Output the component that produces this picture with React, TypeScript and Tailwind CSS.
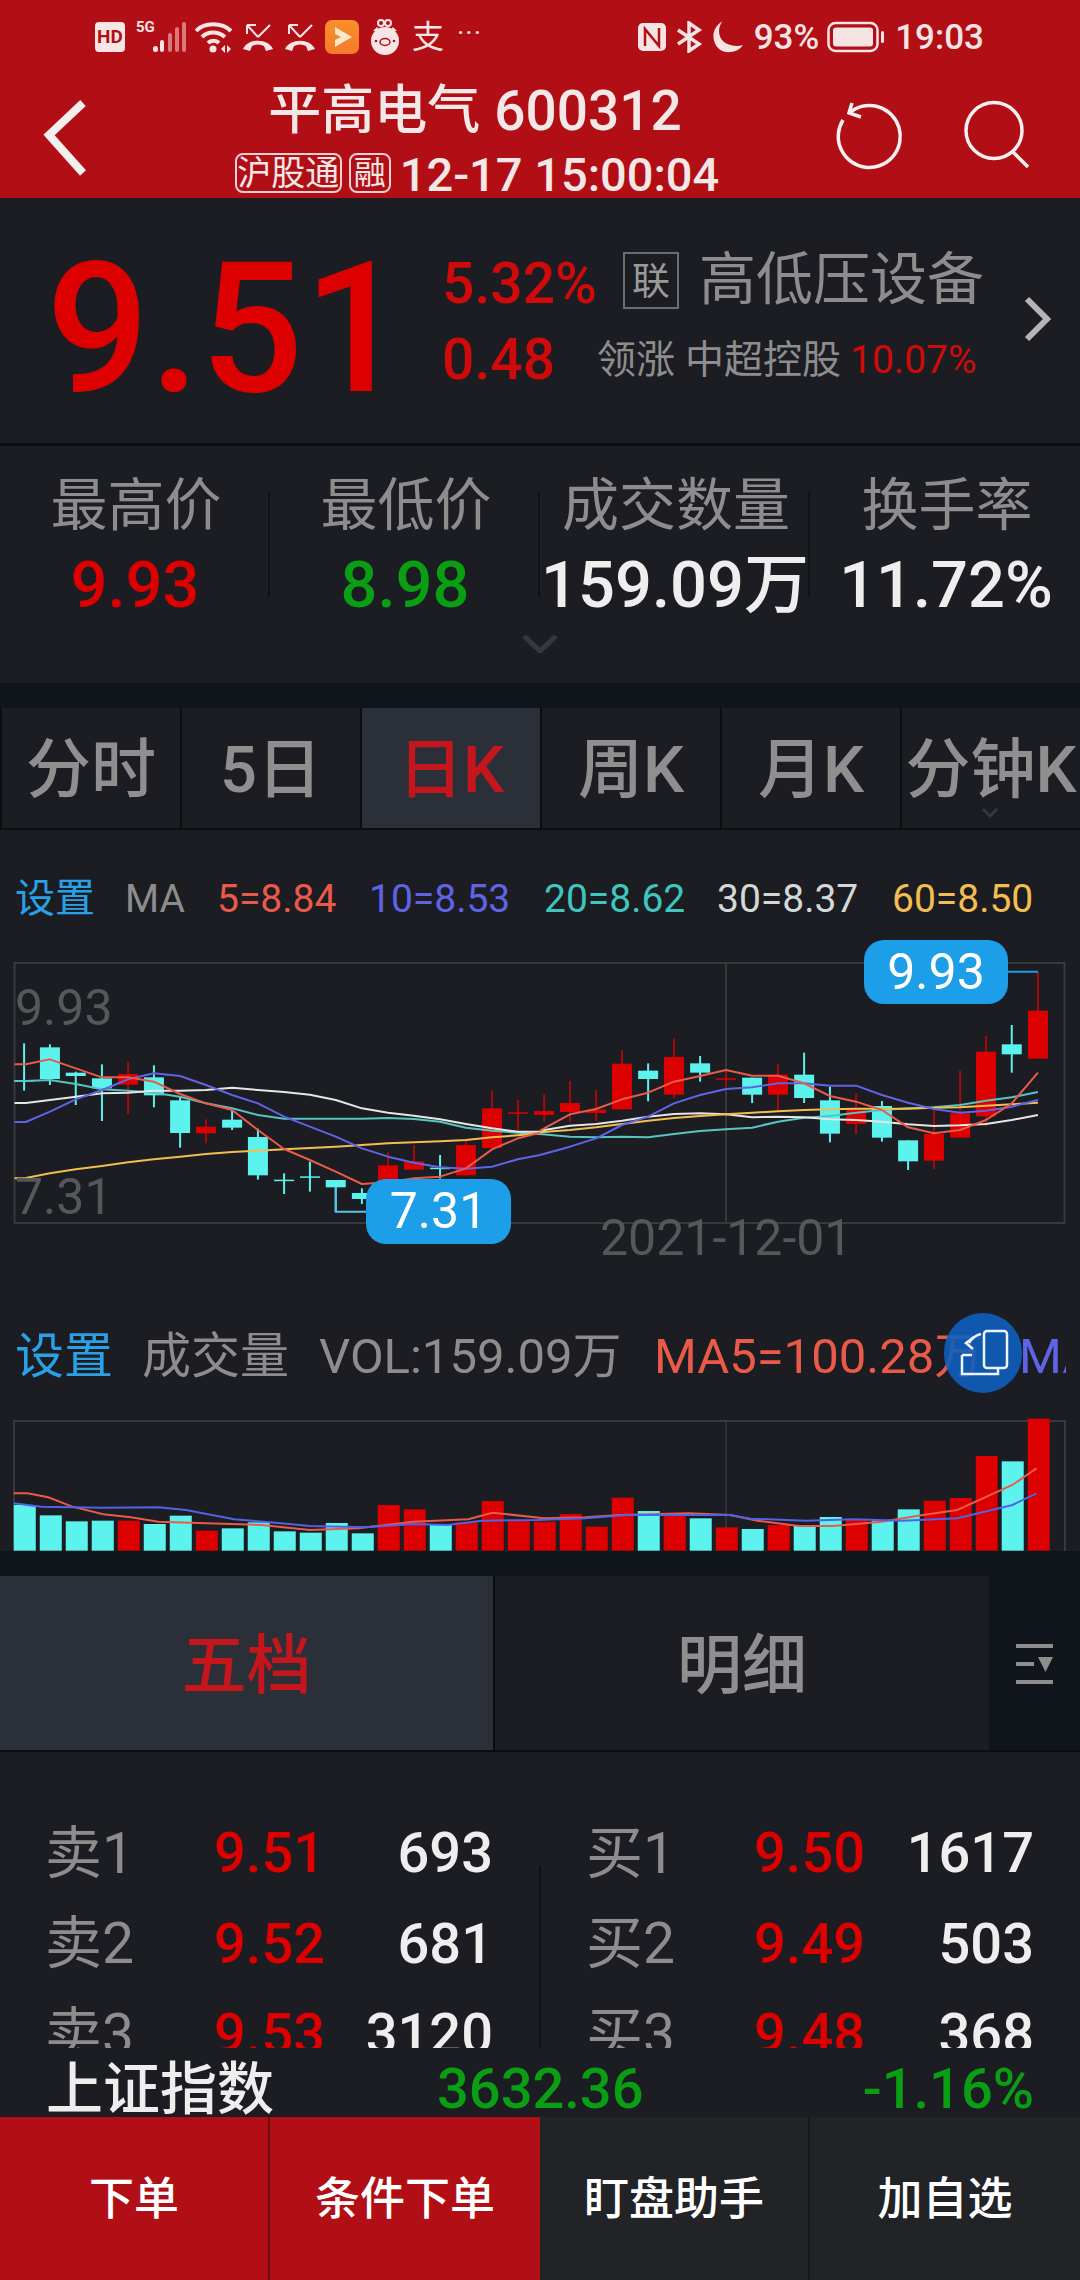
import React from "react";

const RED = "#dc0000";
const CY = "#5cf2ee";
type C = [number, number, number, number, number, number];
// [x, wickTop, wickBottom, bodyTop, bodyBottom, isRed] in crop coordinates
const leftC: C[] = [
  [70, 310, 452, 420, 424, 0], [145, 313, 435, 322, 417, 0], [220, 395, 495, 398, 408, 0], [296, 373, 543, 415, 445, 0],
  [372, 365, 522, 402, 434, 1], [447, 376, 502, 412, 466, 0], [523, 470, 623, 481, 579, 0], [598, 538, 610, 560, 580, 1],
  [674, 510, 570, 539, 563, 0], [749, 566, 719, 591, 706, 0], [825, 700, 762, 719, 722, 0], [900, 665, 755, 709, 713, 0],
  [975, 720, 815, 720, 742, 0], [1051, 745, 792, 759, 777, 0], [1127, 637, 788, 676, 782, 1], [1202, 615, 690, 664, 689, 1],
  [1278, 645, 716, 683, 686, 0], [1353, 600, 706, 615, 706, 1], [1429, 452, 624, 505, 624, 1], [1504, 480, 570, 517, 520, 1],
];
const rightC: C[] = [
  [12, 463, 545, 513, 525, 1], [87, 423, 546, 489, 516, 1], [163, 450, 543, 509, 519, 1], [238, 330, 508, 371, 508, 1],
  [314, 370, 484, 392, 417, 0], [389, 296, 475, 351, 464, 1], [465, 348, 425, 370, 398, 0], [540, 395, 440, 415, 418, 1],
  [616, 413, 489, 413, 464, 0], [691, 373, 512, 404, 464, 1], [767, 338, 489, 404, 474, 0], [842, 440, 607, 481, 581, 0],
  [918, 460, 582, 505, 552, 1], [993, 483, 605, 498, 593, 0], [1069, 601, 690, 601, 664, 0], [1144, 505, 687, 582, 662, 1],
  [1220, 392, 560, 520, 593, 1], [1295, 288, 560, 335, 529, 1], [1370, 255, 398, 313, 343, 0], [1446, 96, 212, 212, 356, 1],
];
const lx = (x: number) => x / 2.904;
const rx = (x: number) => 540 + x / 2.904;
const ky = (y: number) => 940 + y / 3;

const lines: { color: string; l: number[][]; r: number[][] }[] = [
  { color: "#58c4c0", l: [[42,423],[75,423],[145,420],[220,432],[296,448],[372,452],[447,458],[523,470],[598,490],[674,505],[749,525],[825,536],[900,536],[975,536],[1051,536],[1127,534],[1202,537],[1278,545],[1353,563],[1429,572],[1504,578],[1568,582]], r: [[0,582],[87,590],[163,592],[238,590],[314,592],[389,582],[465,573],[540,568],[616,563],[691,545],[767,533],[842,528],[918,518],[993,510],[1069,505],[1144,502],[1220,495],[1295,482],[1370,472],[1446,456]] },
  { color: "#e2e8e4", l: [[42,489],[75,489],[145,480],[220,470],[296,460],[372,458],[447,452],[523,452],[598,450],[674,443],[749,450],[825,456],[900,464],[975,480],[1051,505],[1127,518],[1202,527],[1278,538],[1353,552],[1429,565],[1504,575],[1568,575]], r: [[0,572],[87,557],[163,552],[238,542],[314,530],[389,522],[465,520],[540,523],[616,532],[691,530],[767,532],[842,538],[918,540],[993,545],[1069,553],[1144,558],[1220,556],[1295,552],[1370,540],[1446,525]] },
  { color: "#f4bd4f", l: [[42,715],[75,714],[145,700],[220,688],[296,678],[372,667],[447,658],[523,650],[598,642],[674,636],[749,632],[825,628],[900,624],[975,620],[1051,615],[1127,610],[1202,607],[1278,604],[1353,600],[1429,592],[1504,586],[1568,580]], r: [[0,577],[87,570],[163,562],[238,552],[314,542],[389,534],[465,528],[540,523],[616,518],[691,514],[767,510],[842,508],[918,506],[993,506],[1069,506],[1144,503],[1220,502],[1295,497],[1370,493],[1446,488]] },
  { color: "#5f63e6", l: [[42,546],[75,546],[145,515],[220,478],[296,450],[372,418],[447,400],[523,408],[598,435],[674,465],[749,490],[825,530],[900,560],[975,590],[1051,625],[1127,650],[1202,668],[1278,682],[1353,686],[1429,680],[1504,658],[1568,645]], r: [[0,645],[87,620],[163,595],[238,555],[314,530],[389,490],[465,465],[540,447],[616,442],[691,430],[767,430],[842,437],[918,437],[993,465],[1069,488],[1144,507],[1220,518],[1295,512],[1370,500],[1446,480]] },
  { color: "#ea5a48", l: [[42,373],[75,373],[145,358],[220,385],[296,412],[372,412],[447,425],[523,462],[598,490],[674,510],[749,570],[825,627],[900,660],[975,695],[1051,732],[1127,727],[1202,715],[1278,710],[1353,685],[1429,628],[1504,595],[1568,578]], r: [[0,572],[87,523],[163,507],[238,478],[314,458],[389,425],[465,408],[540,390],[616,407],[691,407],[767,430],[842,468],[918,485],[993,510],[1069,562],[1144,580],[1220,570],[1295,540],[1370,490],[1446,398]] },
];

const vols: [number, number][] = [
  [675,0],[706,0],[724,0],[722,0],[722,1],[732,0],[707,0],[752,1],[745,0],[727,0],[754,0],[758,0],[729,0],[760,0],[675,1],[688,1],[735,0],[727,1],[663,1],[722,1],
  [725,1],[702,1],[740,1],[653,1],[693,0],[700,1],[715,0],[742,1],[747,0],[735,1],[738,0],[711,0],[720,1],[722,0],[688,0],[662,1],[654,1],[528,1],[544,0],[416,1],
];
const vRed = [[20,640],[40,640],[70,652],[105,680],[150,703],[190,712],[230,725],[300,730],[380,735],[450,750],[520,745],[600,725],[680,718],[715,698],[790,715],[850,712],[900,705],[1000,700],[1060,705],[1100,722],[1160,738],[1210,738],[1280,725],[1340,705],[1390,690],[1470,615],[1505,565]];
const vBlue = [[20,670],[60,680],[150,683],[230,682],[270,690],[340,718],[400,728],[450,738],[530,742],[600,732],[650,735],[700,722],[780,720],[850,715],[910,705],[1060,705],[1090,716],[1170,722],[1240,718],[1310,722],[1390,715],[1470,675],[1505,640]];
const vx = (x: number) => x / 1.452;
const vy = (y: number) => 1280 + y / 3;

function Candles({ data, fx }: { data: C[]; fx: (x: number) => number }) {
  return (
    <>
      {data.map(([x, a, b, t, u, red], i) => (
        <g key={i}>
          <line x1={fx(x)} x2={fx(x)} y1={ky(a)} y2={ky(b)} stroke={red ? "#a80a0a" : CY} strokeWidth={2} />
          <rect x={fx(x) - 10} y={ky(t)} width={20} height={Math.max(ky(u) - ky(t), 1.5)} fill={red ? RED : CY} />
        </g>
      ))}
    </>
  );
}

function KChart() {
  return (
    <div className="relative w-[1051px] h-[260px] ml-[14px] shrink-0">
      <svg width={1051} height={260} viewBox="14 963 1051 260" className="block overflow-visible">
        <rect x={14.5} y={963} width={1050} height={260} fill="none" stroke="#38393d" strokeWidth={2} />
        <line x1={726} x2={726} y1={963} y2={1223} stroke="#38393d" strokeWidth={2} />
        <Candles data={leftC} fx={lx} />
        <Candles data={rightC} fx={rx} />
        {lines.map((m, i) => (
          <g key={i} fill="none" stroke={m.color} strokeWidth={2} strokeLinejoin="round">
            <polyline points={m.l.map(([x, y]) => `${lx(x)},${ky(y)}`).join(" ")} />
            <polyline points={m.r.map(([x, y]) => `${rx(x)},${ky(y)}`).join(" ")} />
          </g>
        ))}
        <polyline points={`${lx(975)},${ky(740)} ${lx(975)},${ky(815)} 370,${ky(815)}`} fill="none" stroke="#5cc0e8" strokeWidth={2} />
        <polyline points={`1005,${ky(95)} ${rx(1446)},${ky(95)}`} fill="none" stroke="#1c9fe8" strokeWidth={2} />
      </svg>
      <span className="absolute left-[1px] top-[20px] text-[50px] leading-[50px] text-[#55575a]">9.93</span>
      <span className="absolute left-[1px] top-[209px] text-[50px] leading-[50px] text-[#55575a]">7.31</span>
      <div className="absolute left-[850px] top-[-23px] w-[144px] h-[64px] rounded-[20px] bg-[#1c9fe8] flex items-center justify-center text-[50px] text-white">9.93</div>
      <div className="absolute left-[352px] top-[216px] w-[145px] h-[65px] rounded-[20px] bg-[#1c9fe8] flex items-center justify-center text-[50px] text-white">7.31</div>
    </div>
  );
}

function VolChart() {
  return (
    <div className="w-[1051px] h-[130px] ml-[14px] shrink-0">
      <svg width={1051} height={130} viewBox="14 1421 1051 130" className="block overflow-visible">
        <polyline points="14,1551 14,1421 1065,1421 1065,1551" fill="none" stroke="#38393d" strokeWidth={2} />
        <line x1={726} x2={726} y1={1421} y2={1551} stroke="#38393d" strokeWidth={1.5} />
        {vols.map(([t, r], i) => (
          <rect key={i} x={vx(20 + 37.75 * i)} y={vy(t)} width={22} height={vy(812) - vy(t)} fill={r ? RED : CY} />
        ))}
        <polyline points={vRed.map(([x, y]) => `${vx(x)},${vy(y)}`).join(" ")} fill="none" stroke="#ea5a48" strokeWidth={2} />
        <polyline points={vBlue.map(([x, y]) => `${vx(x)},${vy(y)}`).join(" ")} fill="none" stroke="#5063e6" strokeWidth={2} />
      </svg>
    </div>
  );
}

function Missed() {
  return (
    <svg width={32} height={32} viewBox="0 0 32 32" className="shrink-0">
      <path d="M16 16 L5 4 M5 4 h9 M5 4 v9 M16 16 L28 4" fill="none" stroke="#f8e6e6" strokeWidth={2} />
      <path d="M1 28 C6 17 26 17 31 28 L24 30 L22 25 C18 23 14 23 10 25 L8 30 Z" fill="#f8e6e6" />
    </svg>
  );
}

function StatusBar() {
  return (
    <div className="h-[72px] flex items-center text-[#f6e4e4] pt-[2px]">
      <div className="ml-[95px] w-[30px] h-[30px] rounded-[4px] bg-[#f8e6e6] flex items-center justify-center text-[19px] font-bold text-[#b10f15] shrink-0">HD</div>
      <div className="relative ml-[11px] w-[50px] h-[32px] shrink-0">
        <span className="absolute left-0 top-[-2px] text-[15px] leading-[16px] font-bold">5G</span>
        <svg width={50} height={32} viewBox="0 0 50 32" className="block">
          <rect x={17} y={25} width={5} height={6} rx={2.5} fill="#f8e6e6" />
          <rect x={24} y={19} width={4} height={12} rx={2} fill="#f8e6e6" />
          <rect x={32} y={12} width={4} height={19} rx={2} fill="#d9797c" />
          <rect x={39} y={6} width={4} height={25} rx={2} fill="#d9797c" />
          <rect x={46} y={1} width={4} height={30} rx={2} fill="#d9797c" />
        </svg>
      </div>
      <svg width={38} height={32} viewBox="0 0 38 32" className="ml-[9px] shrink-0">
        <g fill="none" stroke="#f8e6e6" strokeWidth={4}>
          <path d="M1 10 C9 1 27 1 36 10" />
          <path d="M7 16 C13 10 23 10 30 16" />
          <path d="M13 22 C16 19 21 19 24 22" />
        </g>
        <circle cx={18} cy={28} r={3.5} fill="#f8e6e6" />
        <path d="M30 24 v8 l-4 -4 Z M32 24 v8 l4 -4 Z" fill="#f8e6e6" />
      </svg>
      <div className="ml-[9px] shrink-0"><Missed /></div>
      <div className="ml-[10px] shrink-0"><Missed /></div>
      <svg width={34} height={34} viewBox="0 0 34 34" className="ml-[9px] shrink-0">
        <defs>
          <linearGradient id="ap" x1="0" y1="0" x2="0" y2="1">
            <stop offset="0" stopColor="#f99028" />
            <stop offset="1" stopColor="#f57a2a" />
          </linearGradient>
        </defs>
        <rect width={34} height={34} rx={7} fill="url(#ap)" />
        <path d="M10 7 L27 17 L10 27 L10 20 L16 17 L10 14 Z" fill="#fbe6d0" />
      </svg>
      <svg width={30} height={36} viewBox="0 0 30 36" className="ml-[11px] shrink-0">
        <circle cx={11} cy={4} r={3} fill="none" stroke="#f8e6e6" strokeWidth={2} />
        <circle cx={18} cy={4} r={3} fill="none" stroke="#f8e6e6" strokeWidth={2} />
        <circle cx={15} cy={22} r={14} fill="#f8e6e6" />
        <path d="M3 12 L7 8 L10 12 Z M27 12 L23 8 L20 12 Z" fill="#f8e6e6" />
        <ellipse cx={15} cy={23} rx={5} ry={3.5} fill="none" stroke="#b10f15" strokeWidth={1.5} />
        <circle cx={6} cy={22} r={1.3} fill="#b10f15" />
        <circle cx={24} cy={22} r={1.3} fill="#b10f15" />
      </svg>
      <span className="ml-[12px] text-[32px] leading-none w-[34px] shrink-0">支</span>
      <span className="ml-[11px] text-[28px] leading-none tracking-[1px] shrink-0 -translate-y-[4px]">···</span>
      <div className="flex-1" />
      <svg width={30} height={30} viewBox="0 0 30 30" className="shrink-0">
        <rect x={1} y={1} width={28} height={28} rx={5} fill="#f6e4e4" />
        <path d="M8 24 V7 L22 24 V6" fill="none" stroke="#b10f15" strokeWidth={2.5} />
      </svg>
      <svg width={28} height={32} viewBox="0 0 28 32" className="ml-[8px] shrink-0">
        <path d="M3 9 L24 23 L14 30 V2 L24 9 L3 23" fill="none" stroke="#f6e4e4" strokeWidth={3.5} />
      </svg>
      <svg width={34} height={34} viewBox="0 0 33 32" className="ml-[8px] shrink-0">
        <path d="M11 1 C3 12 10 28 31 24 C26 31 15 33 8 28 C0 21 0 7 11 1 Z" fill="#f6e4e4" />
      </svg>
      <span className="ml-[9px] text-[35px] font-medium leading-none shrink-0">93%</span>
      <svg width={58} height={32} viewBox="0 0 58 32" className="ml-[8px] shrink-0">
        <rect x={1.5} y={2} width={49} height={28} rx={7} fill="none" stroke="#f6e4e4" strokeWidth={2.5} />
        <rect x={6} y={6.5} width={40} height={19} rx={3} fill="#f6e4e4" />
        <rect x={54} y={10} width={3} height={12} rx={1.5} fill="#f6e4e4" />
      </svg>
      <span className="ml-[10px] mr-[96px] text-[35px] font-medium leading-none shrink-0">19:03</span>
    </div>
  );
}

function Header() {
  return (
    <div className="h-[198px] bg-[#b10f15] shrink-0 overflow-hidden">
      <StatusBar />
      <div className="h-[126px] flex text-[#f3e7e7]">
        <svg width={60} height={84} viewBox="0 0 60 84" className="ml-[37px] mt-[25px] shrink-0">
          <path d="M46 6 L12 38 L46 76" fill="none" stroke="#f5eeee" strokeWidth={8} />
        </svg>
        <div className="w-[760px] flex flex-col items-center">
          <div className="h-[78px] flex items-center text-[53px] font-medium leading-none -translate-x-[2px]">
            <span>平高电气</span>
            <span className="ml-[14px] text-[55px]">600312</span>
          </div>
          <div className="h-[48px] flex items-center">
            <span className="w-[107px] h-[40px] border-2 border-[#f0d0d0] rounded-[8px] flex items-center justify-center text-[34px] leading-none mt-[-3px]">沪股通</span>
            <span className="w-[42px] h-[40px] ml-[7px] border-2 border-[#f0d0d0] rounded-[8px] flex items-center justify-center text-[32px] leading-none mt-[-3px]">融</span>
            <span className="ml-[9px] text-[47px] leading-none font-medium">12-17 15:00:04</span>
          </div>
        </div>
        <svg width={72} height={72} viewBox="0 0 72 72" className="ml-[-23px] mt-[30px] shrink-0">
          <path d="M9 18 A31 31 0 1 0 15 11" fill="none" stroke="#f7f0f0" strokeWidth={3.5} />
          <path d="M18 1 L15 11 L27 15" fill="none" stroke="#f7f0f0" strokeWidth={3.5} />
        </svg>
        <svg width={72} height={72} viewBox="0 0 72 72" className="ml-[56px] mt-[28px] shrink-0">
          <circle cx={32} cy={30.5} r={28} fill="none" stroke="#f7f0f0" strokeWidth={3.5} />
          <path d="M51 52 L66 67" fill="none" stroke="#f7f0f0" strokeWidth={3.5} />
        </svg>
      </div>
    </div>
  );
}

function Quote() {
  return (
    <div className="h-[248px] shrink-0 flex border-b-[3px] border-[#0d0f12] pl-[46px]">
      <span className="w-[396px] text-[182px] leading-[245px] font-medium text-[#dc0000] shrink-0 mt-[8px]">9.51</span>
      <div className="w-[180px] pt-[48px] flex flex-col text-[#cf0a0a] text-[57px] shrink-0 font-medium">
        <span className="h-[76px] leading-[76px]">5.32%</span>
        <span className="h-[76px] leading-[76px]">0.48</span>
      </div>
      <div className="w-[400px] pt-[48px] flex flex-col shrink-0 -ml-[25px] text-[#8d8d8d]">
        <div className="h-[76px] flex items-center">
          <span className="ml-[26px] w-[56px] h-[57px] border-2 border-[#6b6d70] flex items-center justify-center text-[38px] leading-none text-[#9a9a9a] -mt-[7px] shrink-0">联</span>
          <span className="ml-[20px] text-[57px] leading-none whitespace-nowrap -mt-[10px]">高低压设备</span>
        </div>
        <div className="h-[76px] flex items-center text-[39px] whitespace-nowrap">
          <span>领涨</span>
          <span className="ml-[10px]">中超控股</span>
          <span className="ml-[9px] text-[39px] text-[#cf0a0a]">10.07%</span>
        </div>
      </div>
      <svg width={30} height={46} viewBox="0 0 30 46" className="mt-[98px] ml-[26px] shrink-0">
        <path d="M4 3 L24 23 L4 43" fill="none" stroke="#b5b5b5" strokeWidth={6} />
      </svg>
    </div>
  );
}

function Stat({ label, value, color, last }: { label: string; value: string; color: string; last?: boolean }) {
  return (
    <div className={last ? "h-[105px] flex flex-col items-center" : "h-[105px] flex flex-col items-center border-r-2 border-[#0f1115]"}>
      <span className="-mt-[14px] h-[56px] text-[57px] leading-[56px] text-[#8d8d8d] whitespace-nowrap translate-x-[2px]">{label}</span>
      <span className={`mt-[19px] text-[65px] leading-[64px] font-medium whitespace-nowrap translate-x-[1px] ${color}`}>{value}</span>
    </div>
  );
}

function Stats() {
  return (
    <div className="h-[237px] shrink-0 relative pt-[46px]">
      <div className="grid grid-cols-4">
        <Stat label="最高价" value="9.93" color="text-[#dc0000]" />
        <Stat label="最低价" value="8.98" color="text-[#0a9e14]" />
        <Stat label="成交数量" value="159.09万" color="text-[#eeeeee]" />
        <Stat label="换手率" value="11.72%" color="text-[#eeeeee]" last />
      </div>
      <svg width={36} height={18} viewBox="0 0 36 18" className="absolute left-[522px] top-[189px]">
        <path d="M2 1 L18 16 L34 1" fill="none" stroke="#35383e" strokeWidth={5} />
      </svg>
    </div>
  );
}

function PeriodTabs() {
  const tabs = ["分时", "5日", "日K", "周K", "月K", "分钟K"];
  return (
    <div className="h-[122px] shrink-0 grid grid-cols-6 border-b-2 border-[#0b0d10] relative">
      {tabs.map((t, i) => (
        <div
          key={t}
          className={
            i === 2
              ? "flex items-center justify-center pt-[5px] border-l-2 border-[#0b0d10] bg-[#2b2f38] text-[#c4161c] text-[65px] font-medium whitespace-nowrap"
              : "flex items-center justify-center pt-[5px] border-l-2 border-[#0b0d10] text-[#8f8f8f] text-[65px] font-medium whitespace-nowrap overflow-hidden"
          }
        >
          {t}
        </div>
      ))}
      <svg width={16} height={10} viewBox="0 0 16 10" className="absolute left-[982px] top-[100px]">
        <path d="M1 1 L8 8 L15 1" fill="none" stroke="#35383e" strokeWidth={3} />
      </svg>
    </div>
  );
}

function MaHeader() {
  return (
    <div className="h-[133px] shrink-0 flex items-center pt-[5px] text-[39px] whitespace-nowrap">
      <span className="ml-[15px] w-[110px] text-[#2aa0e6] text-[40px]">设置</span>
      <span className="w-[93px] text-[#8d8d8d]">MA</span>
      <span className="w-[152px] text-[#ea5a48] -ml-[1px]">5=8.84</span>
      <span className="w-[175px] text-[#5f63e6]">10=8.53</span>
      <span className="w-[173px] text-[#3fc7bf]">20=8.62</span>
      <span className="w-[175px] text-[#d4d8d6]">30=8.37</span>
      <span className="text-[#f4bd4f]">60=8.50</span>
    </div>
  );
}

function VolHeader() {
  return (
    <div className="relative h-[168px] shrink-0 pt-[40px] flex items-center text-[49px] whitespace-nowrap overflow-hidden w-[1066px]">
      <span className="ml-[15px] w-[127px] text-[#2aa0e6] shrink-0">设置</span>
      <span className="w-[177px] text-[#8d8d8d] shrink-0">成交量</span>
      <span className="w-[335px] text-[#8d8d8d] shrink-0">VOL:159.09万</span>
      <span className="w-[365px] text-[#ea5a48] shrink-0">MA5=100.28万</span>
      <span className="text-[#5f63e6] shrink-0">MA10</span>
      <div className="absolute left-[944px] top-[60px] w-[78px] h-[80px] rounded-full bg-[#0e5fbe]/90">
        <svg width={78} height={80} viewBox="0 0 78 80" className="block">
          <rect x={40} y={18} width={23} height={37} rx={3} fill="none" stroke="#eef3fb" strokeWidth={2.5} />
          <path d="M18 42 V61 H54 V56 M18 42 H28" fill="none" stroke="#eef3fb" strokeWidth={2.5} />
          <path d="M37 21 C32 22 28 25 25 30" fill="none" stroke="#eef3fb" strokeWidth={2.5} />
          <path d="M30 24 L22 30 L29 36" fill="none" stroke="#eef3fb" strokeWidth={2.5} />
        </svg>
      </div>
    </div>
  );
}

function BookTabs() {
  return (
    <div className="h-[176px] shrink-0 flex border-b-2 border-[#0b0d10]">
      <div className="w-[495px] pt-[8px] border-r-2 border-[#0b0d10] bg-[#2b2f38] flex items-center justify-center text-[65px] font-medium text-[#c4161c]">五档</div>
      <div className="w-[494px] pt-[8px] flex items-center justify-center text-[65px] font-medium text-[#8f8f8f]">明细</div>
      <div className="flex-1 bg-[#10141b] flex items-center justify-center">
        <svg width={38} height={42} viewBox="0 0 38 42">
          <rect x={0} y={2} width={37} height={4} fill="#8d8d8d" />
          <rect x={0} y={20} width={18} height={4} fill="#8d8d8d" />
          <path d="M22 15 H37 L29.5 30 Z" fill="#8d8d8d" />
          <rect x={0} y={38} width={37} height={4} fill="#8d8d8d" />
        </svg>
      </div>
    </div>
  );
}

function BookRow({ label, price, qty, pl, pr, lw }: { label: string; price: string; qty: string; pl: string; pr: string; lw: string }) {
  return (
    <div className={`h-[90.5px] flex items-center font-medium ${pl} ${pr}`}>
      <span className={`${lw} text-[57px] text-[#8d8d8d] font-normal shrink-0 whitespace-nowrap`}>{label}</span>
      <span className="w-[120px] text-[56px] text-[#dc0000] shrink-0">{price}</span>
      <span className="flex-1 text-right text-[56px] text-[#eeeeee]">{qty}</span>
    </div>
  );
}

function Book() {
  const sell = [["卖1", "9.51", "693"], ["卖2", "9.52", "681"], ["卖3", "9.53", "3120"]];
  const buy = [["买1", "9.50", "1617"], ["买2", "9.49", "503"], ["买3", "9.48", "368"]];
  return (
    <div className="relative h-[296px] shrink-0 overflow-hidden pt-[56px] grid grid-cols-2 content-start">
      <div>
        {sell.map(([a, b, c]) => (
          <BookRow key={a} label={a} price={b} qty={c} pl="pl-[45px]" pr="pr-[47px]" lw="w-[169px]" />
        ))}
      </div>
      <div>
        {buy.map(([a, b, c]) => (
          <BookRow key={a} label={a} price={b} qty={c} pl="pl-[46px]" pr="pr-[46px]" lw="w-[168px]" />
        ))}
      </div>
      <div className="absolute left-[539px] top-[114px] bottom-0 w-[2px] bg-[#0f1115]" />
    </div>
  );
}

function IndexRow() {
  return (
    <div className="h-[69px] shrink-0 flex items-center pt-[13px] pl-[46px] pr-[46px] whitespace-nowrap">
      <span className="w-[391px] text-[57px] leading-none font-medium text-[#eeeeee]">上证指数</span>
      <span className="text-[56px] leading-none font-medium text-[#0a9e14]">3632.36</span>
      <span className="flex-1 text-right text-[56px] leading-none font-medium text-[#0a9e14]">-1.16%</span>
    </div>
  );
}

function BottomBar() {
  return (
    <div className="flex-1 grid grid-cols-4 text-white text-[45px] font-medium">
      <div className="bg-[#b10f15] border-r-2 border-[#6e0c10] flex items-center justify-center pt-[3px]">下单</div>
      <div className="bg-[#b10f15] flex items-center justify-center pt-[3px]">条件下单</div>
      <div className="bg-[#212327] border-r-2 border-[#15171a] flex items-center justify-center pt-[3px]">盯盘助手</div>
      <div className="bg-[#212327] flex items-center justify-center pt-[3px]">加自选</div>
    </div>
  );
}

export default function App() {
  return (
    <div className="w-[1080px] h-[2280px] flex flex-col bg-[#1b1d22] overflow-hidden [font-family:Roboto,'Noto_Sans_CJK_SC',sans-serif]">
      <Header />
      <Quote />
      <Stats />
      <div className="h-[25px] shrink-0 bg-[#10141b]" />
      <PeriodTabs />
      <MaHeader />
      <KChart />
      <div className="h-[30px] shrink-0 relative">
        <span className="absolute left-[600px] top-[-10px] text-[50px] leading-[50px] text-[#55575a]">2021-12-01</span>
      </div>
      <VolHeader />
      <VolChart />
      <div className="h-[25px] shrink-0 bg-[#10141b]" />
      <BookTabs />
      <Book />
      <IndexRow />
      <BottomBar />
    </div>
  );
}
